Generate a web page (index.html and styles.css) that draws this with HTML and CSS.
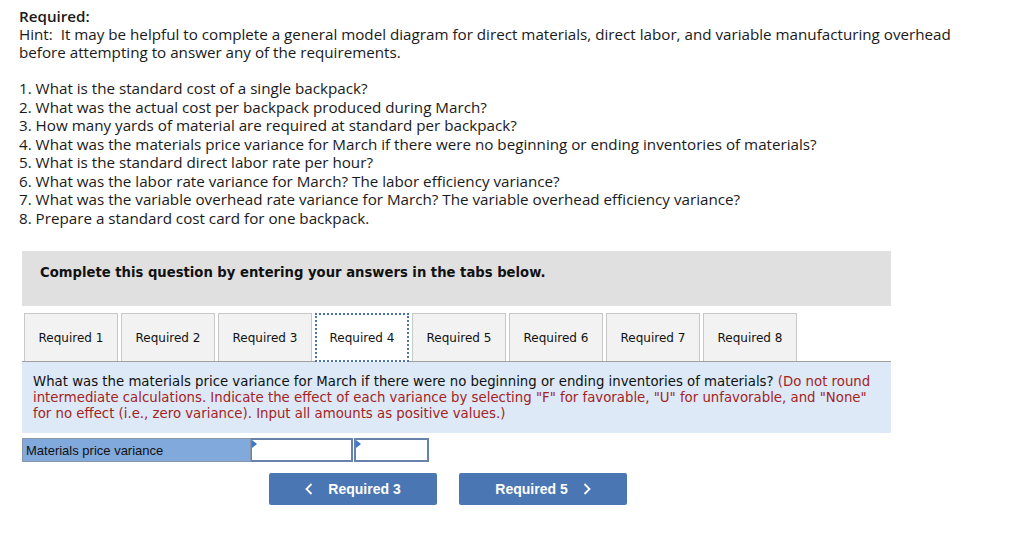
FILE: index.html
```html
<!DOCTYPE html>
<html>
<head>
<meta charset="utf-8">
<link rel="stylesheet" href="styles.css">
</head>
<body>
<div class="page">
  <div class="intro">
    <div class="req-title">Required:</div>
    <div>Hint:&nbsp; It may be helpful to complete a general model diagram for direct materials, direct labor, and variable manufacturing overhead before attempting to answer any of the requirements.</div>
    <ol class="questions">
      <li>1. What is the standard cost of a single backpack?</li>
      <li>2. What was the actual cost per backpack produced during March?</li>
      <li>3. How many yards of material are required at standard per backpack?</li>
      <li>4. What was the materials price variance for March if there were no beginning or ending inventories of materials?</li>
      <li>5. What is the standard direct labor rate per hour?</li>
      <li>6. What was the labor rate variance for March? The labor efficiency variance?</li>
      <li>7. What was the variable overhead rate variance for March? The variable overhead efficiency variance?</li>
      <li>8. Prepare a standard cost card for one backpack.</li>
    </ol>
  </div>

  <div class="complete-box">Complete this question by entering your answers in the tabs below.</div>

  <div class="tabs">
    <div class="tab">Required 1</div>
    <div class="tab">Required 2</div>
    <div class="tab">Required 3</div>
    <div class="tab active">Required 4</div>
    <div class="tab">Required 5</div>
    <div class="tab">Required 6</div>
    <div class="tab">Required 7</div>
    <div class="tab">Required 8</div>
  </div>

  <div class="panel">What was the materials price variance for March if there were no beginning or ending inventories of materials? <span class="red">(Do not round intermediate calculations. Indicate the effect of each variance by selecting "F" for favorable, "U" for unfavorable, and "None" for no effect (i.e., zero variance). Input all amounts as positive values.)</span></div>

  <div class="answer-row">
    <div class="label-cell">Materials price variance</div>
    <div class="input-cell wide"></div>
    <div class="input-cell narrow"></div>
  </div>

  <div class="nav">
    <div class="btn">
      <svg class="chev" width="8" height="12" viewBox="0 0 8 12"><path d="M6.5 1 L1.5 6 L6.5 11" fill="none" stroke="#fff" stroke-width="1.8"/></svg>
      <span>Required 3</span>
    </div>
    <div class="btn">
      <span>Required 5</span>
      <svg class="chev" width="8" height="12" viewBox="0 0 8 12"><path d="M1.5 1 L6.5 6 L1.5 11" fill="none" stroke="#fff" stroke-width="1.8"/></svg>
    </div>
  </div>
</div>
</body>
</html>
```
FILE: styles.css
```css
html, body { margin: 0; padding: 0; background: #fff; }
.page { padding: 7px 0 0 19px; width: 960px; }
.intro {
  font-family: "Open Sans", "Liberation Sans", sans-serif;
  font-size: 15.2px;
  line-height: 18px;
  color: #1a1a1a;
}
.req-title { font-weight: 600; }
.questions { list-style: none; margin: 18px 0 0 0; padding: 0; }
.questions li { line-height: 18.5px; }

.complete-box {
  margin: 24px 0 0 3px;
  width: 869px;
  height: 55px;
  box-sizing: border-box;
  background: #e0e0e0;
  padding: 14px 0 0 18px;
  font-family: "DejaVu Sans", Verdana, sans-serif;
  font-weight: bold;
  font-size: 13.2px;
  color: #111;
}

.tabs {
  display: flex;
  gap: 3px;
  margin: 7px 0 0 3px;
  width: 869px;
  border-bottom: 1px solid #a0a0a0;
  padding-left: 2px;
  box-sizing: border-box;
}
.tab {
  width: 94px;
  height: 48px;
  box-sizing: border-box;
  background: #f2f2f2;
  border: 1px solid #c8c8c8;
  border-bottom: none;
  display: flex;
  align-items: center;
  justify-content: center;
  font-family: "DejaVu Sans", Verdana, sans-serif;
  font-size: 12px;
  color: #111;
}
.tab.active {
  background: #fff;
  border: 2px dotted #4a72b8;
  margin-bottom: -1px;
  height: 49px;
}

.panel {
  margin-left: 3px;
  width: 869px;
  box-sizing: border-box;
  background: #dde9f6;
  padding: 12px 10px 11px 11px;
  font-family: "DejaVu Sans", Verdana, sans-serif;
  font-size: 13.3px;
  line-height: 16px;
  color: #111;
}
.red { color: #a3241e; }

.answer-row {
  display: flex;
  margin: 5px 0 0 3px;
  height: 24px;
}
.label-cell {
  width: 229px;
  box-sizing: border-box;
  background: #82a9dc;
  border: 1px solid #8a97a8;
  font-family: "Liberation Sans", Arial, sans-serif;
  font-size: 13px;
  padding: 4px 0 0 3px;
  color: #111;
}
.input-cell {
  position: relative;
  box-sizing: border-box;
  background: #fff;
  border: 2px solid #6783ad;
  border-left-width: 1px;
}
.input-cell::before {
  content: "";
  position: absolute;
  left: 0; top: 0;
  border-top: 4px solid transparent;
  border-bottom: 4px solid transparent;
  border-left: 5px solid #3f76c4;
}
.input-cell.wide { width: 102px; }
.input-cell.narrow { width: 75px; border-left: 2px solid #6783ad; margin-left: 1px; }

.nav {
  display: flex;
  gap: 22px;
  margin: 11px 0 0 250px;
}
.btn {
  width: 168px;
  height: 32px;
  background: #4a76b4;
  border-radius: 2px;
  display: flex;
  align-items: center;
  justify-content: center;
  gap: 15px;
  color: #fff;
  font-family: "Liberation Sans", Arial, sans-serif;
  font-weight: bold;
  font-size: 14px;
}
.chev { display: block; }
```
